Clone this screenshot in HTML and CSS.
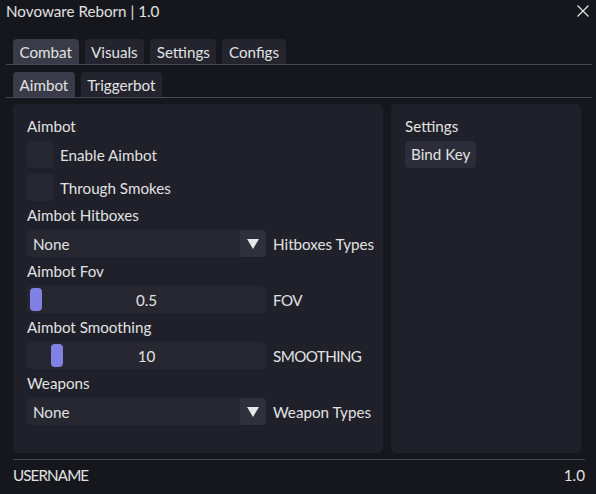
FILE: index.html
```html
<!DOCTYPE html>
<html>
<head>
<meta charset="utf-8">
<link rel="stylesheet" href="styles.css">
</head>
<body>
<div class="window">
  <div class="titlebar">
    <span class="title">Novoware Reborn | 1.0</span>
    <svg class="close" width="12" height="12" viewBox="0 0 12 12"><path d="M0.5 0.5 L11.5 11.5 M11.5 0.5 L0.5 11.5" stroke="#e6e6e6" stroke-width="1.2"/></svg>
  </div>
  <div class="tabbar main-tabs">
    <div class="tab active">Combat</div>
    <div class="tab">Visuals</div>
    <div class="tab">Settings</div>
    <div class="tab">Configs</div>
  </div>
  <div class="tabbar sub-tabs">
    <div class="tab active">Aimbot</div>
    <div class="tab">Triggerbot</div>
  </div>
  <div class="panels">
    <div class="panel left">
      <div class="label">Aimbot</div>
      <div class="row"><div class="checkbox"></div><span>Enable Aimbot</span></div>
      <div class="row"><div class="checkbox"></div><span>Through Smokes</span></div>
      <div class="label">Aimbot Hitboxes</div>
      <div class="row">
        <div class="combo"><span class="combo-value">None</span><div class="combo-btn"><svg width="12" height="12" viewBox="0 0 12 12"><path d="M0 1 H12 L6 11 Z" fill="#e6e6e6"/></svg></div></div>
        <span class="side">Hitboxes Types</span>
      </div>
      <div class="label">Aimbot Fov</div>
      <div class="row">
        <div class="slider"><div class="grab" style="left:3px"></div><span>0.5</span></div>
        <span class="side caps">FOV</span>
      </div>
      <div class="label">Aimbot Smoothing</div>
      <div class="row">
        <div class="slider"><div class="grab" style="left:24px"></div><span>10</span></div>
        <span class="side caps">SMOOTHING</span>
      </div>
      <div class="label">Weapons</div>
      <div class="row">
        <div class="combo"><span class="combo-value">None</span><div class="combo-btn"><svg width="12" height="12" viewBox="0 0 12 12"><path d="M0 1 H12 L6 11 Z" fill="#e6e6e6"/></svg></div></div>
        <span class="side">Weapon Types</span>
      </div>
    </div>
    <div class="panel right">
      <div class="label">Settings</div>
      <div class="row"><div class="button">Bind Key</div></div>
    </div>
  </div>
  <div class="footer">
    <span class="caps user">USERNAME</span>
    <span>1.0</span>
  </div>
</div>
</body>
</html>
```
FILE: styles.css
```css
html, body {
  margin: 0;
  padding: 0;
  background: #16171c;
}
body {
  width: 596px;
  height: 494px;
  overflow: hidden;
  font-family: "Lato", "Noto Sans", sans-serif;
  font-size: 15.2px;
  color: #e2e2e2;
  white-space: nowrap;
}
.window {
  display: flex;
  flex-direction: column;
}
.titlebar {
  height: 22px;
  display: flex;
  align-items: center;
  justify-content: space-between;
  padding: 0 7px 0 6px;
}
.title {
  line-height: 22px;
}
.close {
  margin-top: -1px;
}
.tabbar {
  display: flex;
  gap: 6px;
  padding-left: 7px;
  border-bottom: 1px solid #474856;
}
.main-tabs {
  margin: 17px 4px 0 6px;
}
.sub-tabs {
  margin: 7px 4px 0 6px;
}
.tab {
  height: 25px;
  line-height: 26px;
  padding: 0 6.5px;
  background: #23242e;
  border-radius: 4px 4px 0 0;
}
.tab.active {
  background: #3a3b48;
}
.panels {
  display: flex;
  gap: 8px;
  margin: 6px 0 0 13px;
  height: 349px;
}
.panel {
  background: #1f2029;
  border-radius: 5px;
  padding: 14px 14px;
  display: flex;
  flex-direction: column;
  gap: 6px;
  box-sizing: border-box;
}
.panel.left {
  width: 370px;
}
.panel.right {
  width: 190px;
}
.label {
  height: 17px;
  line-height: 17px;
}
.row {
  display: flex;
  align-items: center;
  gap: 6px;
  height: 27px;
}
.checkbox {
  width: 27px;
  height: 27px;
  border-radius: 4px;
  background: #262731;
  flex: none;
}
.combo {
  flex: none;
  width: 239px;
  height: 27px;
  border-radius: 4px;
  background: #262731;
  display: flex;
  align-items: center;
  justify-content: space-between;
  overflow: hidden;
}
.combo-value {
  padding-left: 6px;
}
.combo-btn {
  width: 26px;
  height: 27px;
  background: #2e303c;
  display: flex;
  align-items: center;
  justify-content: center;
}
.side {
  margin-left: 1px;
}
.caps {
  letter-spacing: -0.6px;
}
.user {
  letter-spacing: -0.9px;
}
.slider {
  flex: none;
  position: relative;
  width: 239px;
  height: 27px;
  border-radius: 4px;
  background: #262731;
  display: flex;
  align-items: center;
  justify-content: center;
}
.grab {
  position: absolute;
  top: 2px;
  width: 12px;
  height: 23px;
  border-radius: 4px;
  background: #8181e4;
}
.button {
  height: 27px;
  line-height: 27px;
  padding: 0 6px;
  background: #2b2d38;
  border-radius: 4px;
}
.footer {
  margin: 6px 11px 0 13px;
  border-top: 1px solid #474856;
  display: flex;
  justify-content: space-between;
  padding-top: 7px;
  line-height: 16px;
}
```
